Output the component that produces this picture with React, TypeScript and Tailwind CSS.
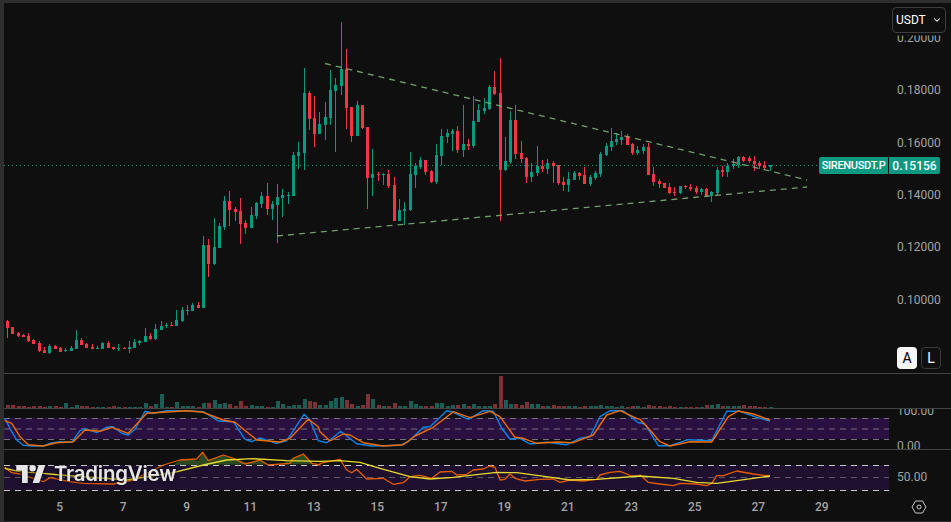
import { ChevronDown } from "lucide-react";

// x, high, body top, body bottom, low, up (1) or down (0), volume height. All in page pixels.
const candles: number[][] = [
  [7,320,321,328,338,0,3],[12,327,327,334,334,0,3],[18,332,333,336,337,0,2],[23,334,335,337,337,0,2],[28,333,336,341,342,0,1],
  [33,339,340,344,344,0,2],[39,341,343,351,352,0,2],[44,347,350,353,353,0,1],[49,344,346,353,354,1,2],[55,345,346,349,349,0,2],
  [60,347,348,352,352,0,1],[65,348,350,351,352,1,5],[71,346,348,351,351,1,1],[76,330,340,349,349,1,3],[81,338,340,345,345,0,2],
  [86,343,344,348,348,0,2],[92,344,347,349,349,0,1],[97,346,348,349,349,1,1],[102,342,343,349,349,1,1],[108,341,343,348,348,0,1],
  [113,347,347,349,350,0,2],[118,344,348,349,351,1,1],[124,347,348,349,349,0,1],[129,341,347,349,353,1,1],[134,339,342,348,348,1,1],
  [139,340,341,343,345,1,1],[145,328,336,342,342,1,5],[150,333,336,339,340,0,2],[155,324,329,339,340,1,4],[161,321,326,330,330,1,14],
  [166,323,325,326,328,1,1],[171,322,325,326,326,0,1],[176,310,320,326,326,1,6],[182,307,310,321,322,1,2],[187,305,310,311,315,1,2],
  [192,303,305,311,311,1,2],[198,302,305,308,308,0,1],[203,236,245,308,308,1,5],[208,239,245,264,277,0,5],[214,218,247,264,265,1,8],
  [219,223,226,248,248,1,4],[224,196,201,227,230,1,5],[229,191,201,210,226,0,4],[235,207,209,212,221,0,2],[240,198,211,224,244,0,7],
  [245,220,223,228,234,0,2],[251,207,215,228,228,1,3],[256,202,203,216,219,1,2],[261,192,196,204,208,1,2],[267,183,196,209,215,0,1],
  [272,201,204,209,220,1,1],[277,184,197,205,243,1,7],[282,189,195,198,217,1,4],[288,192,195,196,204,1,2],[293,152,155,196,196,1,3],
  [298,142,152,156,169,1,3],[304,68,93,153,170,1,9],[309,91,93,119,130,0,7],[314,96,118,134,147,0,6],[319,112,124,134,134,1,3],
  [325,102,117,125,140,1,3],[330,70,90,118,125,1,7],[335,78,85,91,152,1,10],[341,22,69,86,95,1,11],[346,49,69,108,129,0,8],
  [351,107,107,136,142,0,4],[357,101,105,136,136,1,2],[362,105,105,128,129,0,3],[367,127,127,178,209,0,14],[372,149,174,178,196,1,9],
  [378,172,174,175,181,0,3],[383,173,174,175,185,1,2],[388,170,174,186,188,0,2],[394,177,185,221,221,0,5],[399,199,210,221,221,1,2],
  [404,202,209,211,225,1,2],[410,152,174,210,211,1,7],[415,163,166,175,188,1,4],[420,157,160,167,169,1,2],[425,160,160,172,175,0,2],
  [431,170,171,182,183,0,2],[436,144,155,182,184,1,5],[441,129,136,156,165,1,5],[447,129,133,137,143,1,2],[452,129,131,134,151,1,3],
  [457,126,131,150,153,0,3],[463,105,144,150,157,1,4],[468,139,144,146,150,0,2],[473,96,121,146,148,1,4],[478,104,110,122,122,1,2],
  [484,98,108,111,114,1,2],[489,85,87,109,110,1,2],[494,71,87,94,95,0,4],[500,58,93,170,221,0,32],[505,137,161,170,171,1,8],
  [510,111,120,162,164,1,4],[515,105,120,154,159,0,4],[521,141,153,159,163,0,3],[526,157,158,177,183,0,6],[531,163,172,177,182,1,4],
  [537,146,166,173,176,1,4],[542,160,166,169,172,0,2],[547,159,163,169,174,1,2],[553,161,163,166,183,0,3],[558,165,165,183,185,0,2],
  [563,177,182,185,191,0,2],[568,172,179,185,192,1,2],[574,171,173,180,180,1,2],[579,172,173,176,180,0,1],[584,167,175,184,184,0,2],
  [590,175,177,184,186,1,2],[595,171,173,178,180,1,2],[600,152,154,174,177,1,3],[606,143,146,155,156,1,2],[611,128,141,147,151,1,2],
  [616,133,139,142,145,1,1],[621,131,137,140,145,1,2],[627,134,136,145,145,0,1],[632,143,144,153,155,0,2],[637,146,150,153,155,1,2],
  [643,144,147,151,154,1,1],[648,143,147,175,175,0,3],[653,167,174,182,186,0,2],[659,179,181,184,188,0,2],[664,183,183,188,188,0,1],
  [669,183,187,193,194,0,2],[674,187,192,193,196,0,1],[680,186,186,193,194,1,1],[685,185,186,187,189,0,1],[690,184,187,189,191,0,1],
  [696,186,188,192,194,0,1],[701,188,189,192,195,1,1],[706,188,189,196,197,0,3],[711,191,192,196,202,1,3],[717,167,170,193,195,1,4],
  [722,166,170,172,177,0,2],[727,163,166,172,177,1,2],[733,159,164,166,169,1,2],[738,156,157,165,168,1,2],[743,156,157,161,162,0,3],
  [749,156,158,161,163,0,2],[754,156,161,164,171,0,2],[759,161,163,166,169,0,1],[764,161,165,168,169,0,1],[770,165,165,167,171,1,1],
];

// scales points read off 3x crops back to page pixels
const trace = (ox: number, oy: number, pts: string) =>
  pts
    .trim()
    .split(/\s+/)
    .map((p) => {
      const [x, y] = p.split(",").map(Number);
      return `${(ox + x / 3).toFixed(1)},${(oy + y / 3).toFixed(1)}`;
    })
    .join(" ");

const stochK = [
  trace(0, 370, "14,145 35,185 50,210 70,226 100,228 130,228 150,220 180,215 215,217 240,182 258,176 290,188 320,172 340,170 365,190 385,195 405,178 435,124 460,130 500,122 560,122 610,125 655,153 700,155 735,208 755,215 780,204 830,220 860,212 912,133 930,150 955,212"),
  trace(320, 370, "20,218 62,184 110,221 155,228 240,226 265,215 310,172 330,170 380,122 400,127 445,148 490,122 520,124 545,175 570,207 600,205 630,222 680,217 740,224 780,205 810,200 840,140 870,122 910,122 955,158"),
  trace(640, 340, "0,248 15,252 55,317 90,317 145,299 215,302 260,214 300,214 350,232 390,243"),
].join(" ");

const stochD = [
  trace(0, 370, "14,152 35,160 60,200 85,224 130,228 170,218 220,215 255,180 300,184 335,172 385,190 440,130 490,127 560,122 610,127 670,150 705,157 770,210 840,216 870,205 925,148 955,170"),
  trace(320, 370, "0,185 30,213 70,192 90,195 130,218 190,228 250,224 285,198 340,172 400,125 450,143 510,124 540,140 585,202 610,205 650,220 710,216 760,218 820,195 860,135 900,122 950,145"),
  trace(640, 340, "0,238 30,270 60,305 90,318 150,305 215,306 265,230 295,213 340,222 390,240"),
].join(" ");

const rsi = [
  trace(0, 370, "14,292 35,308 60,312 130,335 150,323 210,335 250,340 340,342 400,330 490,285 540,270 590,267 608,247 625,272 670,255 700,265 735,282 780,270 805,285 870,280 880,265 910,252 935,280 960,285"),
  trace(320, 370, "0,280 60,268 80,300 95,308 110,298 140,327 190,325 220,343 250,338 270,320 300,316 335,325 360,306 395,304 410,315 440,313 460,300 490,297 510,288 525,292 540,330 555,328 570,312 585,325 615,333 660,328 700,327 720,337 750,330 790,333 830,328 840,315 870,307 900,304 935,318 960,318"),
  trace(640, 340, "0,405 25,427 60,432 100,437 120,430 170,432 200,437 215,430 230,407 250,407 290,393 340,402 390,408"),
].join(" ");

const rsiMa = [
  trace(0, 370, "14,295 60,305 130,310 180,315 380,330 520,308 610,285 680,270 760,266 860,272 960,274"),
  trace(320, 370, "60,272 120,277 180,295 270,320 330,327 400,322 470,314 530,307 590,308 700,323 750,330 830,328 960,318"),
  trace(640, 340, "0,408 100,415 170,427 230,430 290,422 390,408"),
].join(" ");

const prices = ["0.20000", "0.18000", "0.16000", "0.14000", "0.12000", "0.10000"];
const dates = ["5", "7", "9", "11", "13", "15", "17", "19", "21", "23", "25", "27", "29"];

function Candles() {
  return (
    <svg viewBox="4 3 885 370" className="w-[885px] h-[370px] shrink-0" shapeRendering="crispEdges">
      <line x1="4" y1="165.5" x2="818" y2="165.5" stroke="#089981" strokeDasharray="1 3" />
      {candles.map(([x, hi, top, bot, lo, up]) => (
        <g key={x} fill={up ? "#089981" : "#f23645"}>
          <rect x={x} y={hi} width="1" height={lo - hi} />
          <rect x={x - 1} y={top} width="3" height={bot - top} />
        </g>
      ))}
      <g shapeRendering="auto" stroke="#81b67c" strokeWidth="1.3" strokeOpacity="0.85" strokeDasharray="6 5">
        <line x1="325" y1="63.5" x2="807" y2="180" />
        <line x1="277" y1="236" x2="807" y2="187" />
      </g>
    </svg>
  );
}

function Volume() {
  return (
    <svg viewBox="4 374 885 34" className="w-[885px] h-[34px] shrink-0" shapeRendering="crispEdges">
      {candles.map(([x, , , , , up, vol]) => (
        <rect key={x} x={x - 1} y={408 - vol} width="4" height={vol} fill={up ? "#1a5f56" : "#7d3035"} />
      ))}
    </svg>
  );
}

function StochRsi() {
  return (
    <svg viewBox="4 409 885 40" className="w-[885px] h-[40px] shrink-0">
      <rect x="4" y="418" width="885" height="21" fill="#2a1040" />
      <g stroke="#77717f" strokeDasharray="6 5">
        <line x1="4" y1="418.5" x2="889" y2="418.5" />
        <line x1="4" y1="429" x2="889" y2="429" />
        <line x1="4" y1="439.5" x2="889" y2="439.5" />
      </g>
      <polyline points={stochK} fill="none" stroke="#0a84e8" strokeWidth="1.4" strokeLinejoin="round" />
      <polyline points={stochD} fill="none" stroke="#ef6c00" strokeWidth="1.4" strokeLinejoin="round" />
    </svg>
  );
}

function Rsi() {
  return (
    <svg viewBox="4 450 885 42" className="w-[885px] h-[42px] shrink-0">
      <rect x="4" y="465" width="885" height="25" fill="#1f1030" />
      <polygon
        points={trace(170, 445, "10,60 30,46 60,42 85,47 98,22 112,46 160,30 175,38 200,42 235,55 270,46 295,60 340,55 365,40 400,27 430,58")}
        fill="#2b4a22"
      />
      <g strokeDasharray="6 5">
        <line x1="4" y1="465.5" x2="889" y2="465.5" stroke="#c9c9c9" />
        <line x1="4" y1="477.5" x2="889" y2="477.5" stroke="#5f5a69" />
        <line x1="4" y1="490.5" x2="889" y2="490.5" stroke="#c9c9c9" />
      </g>
      <polyline points={rsi} fill="none" stroke="#e65c00" strokeWidth="1.3" strokeLinejoin="round" />
      <polyline points={rsiMa} fill="none" stroke="#e6d92e" strokeWidth="1.3" strokeLinejoin="round" />
    </svg>
  );
}

function Separator() {
  return <div className="h-px bg-[#434343] shrink-0" />;
}

export default function App() {
  return (
    <div className="relative w-[951px] h-[522px] overflow-hidden flex flex-col bg-[#0f0f0f] border-t-[3px] border-l-4 border-b border-[#2e2e2e] text-[#a3a3a3] text-[12px] leading-[14px] font-['Roboto',sans-serif]">
      {/* Main pane */}
      <div className="flex h-[370px] shrink-0">
        <Candles />
        <div className="flex-1 flex flex-col pt-[9px] pl-[8px]">
          {prices.map((p) => (
            <div key={p} className="h-[52.3px] flex items-center">{p}</div>
          ))}
        </div>
      </div>
      <Separator />

      {/* Volume */}
      <div className="flex h-[34px] shrink-0">
        <Volume />
      </div>
      <Separator />

      {/* Stoch RSI */}
      <div className="flex h-[40px] shrink-0 overflow-hidden">
        <StochRsi />
        <div className="flex-1 flex flex-col gap-[21px] -mt-[5px] pl-[8px]">
          <div>100.00</div>
          <div>0.00</div>
        </div>
      </div>
      <Separator />

      {/* RSI */}
      <div className="flex h-[42px] shrink-0">
        <Rsi />
        <div className="flex-1 pt-[20px] pl-[8px]">50.00</div>
      </div>

      {/* Time axis */}
      <div className="flex flex-1 items-center">
        <div className="w-[885px] flex pl-[24px] font-medium">
          {dates.map((d) => (
            <div key={d} className="w-[63.5px] text-center">{d}</div>
          ))}
        </div>
        <div className="flex-1 flex justify-center pr-[2px]">
          <svg viewBox="0 0 16 14" className="w-[16px] h-[14px]" fill="none" stroke="#c8c8c8">
            <polygon points="1,7 4.5,1 11.5,1 15,7 11.5,13 4.5,13" />
            <circle cx="8" cy="7" r="2" />
          </svg>
        </div>
      </div>

      {/* Overlays */}
      <div className="absolute left-[12px] top-[458px] flex items-center gap-[8px] text-[#e6e6e6] drop-shadow-[0_0_2px_#000]">
        <svg viewBox="0 0 36 22" className="w-[30px] h-[18px]" fill="currentColor">
          <path d="M14 22H7V7H0V0h14v22zM28 22h-8L27.5 0h8L28 22z" />
          <circle cx="20" cy="4" r="4" />
        </svg>
        <span className="text-[20.4px] leading-[26px] font-semibold tracking-[-0.2px] font-['Inter',sans-serif]">TradingView</span>
      </div>

      <button className="absolute left-[888px] top-[4px] w-[54px] h-[26px] flex items-center justify-between pl-[3px] pr-[3px] bg-[#0f0f0f] border border-[#3d3d3d] rounded-[4px] text-white shadow-[0_0_0_2.5px_#0f0f0f]">
        USDT
        <ChevronDown size={10} strokeWidth={2.5} />
      </button>

      <div className="absolute left-[815px] top-[154px] flex gap-px font-medium text-white">
        <div className="w-[69px] h-[17px] flex items-center justify-center bg-[#0b9981] rounded-l-[2px] text-[11px] tracking-[-0.3px]">SIRENUSDT.P</div>
        <div className="w-[51px] h-[17px] flex items-center justify-center bg-[#0b9981] rounded-r-[2px]">0.15156</div>
      </div>

      <div className="absolute left-[893px] top-[344px] flex gap-[4px] text-[14px]">
        <div className="w-[20px] h-[22px] flex items-center justify-center rounded-[4px] bg-[#f5f5f5] text-black">A</div>
        <div className="w-[20px] h-[22px] flex items-center justify-center rounded-[4px] border border-[#3a3a3a] text-white">L</div>
      </div>
    </div>
  );
}
